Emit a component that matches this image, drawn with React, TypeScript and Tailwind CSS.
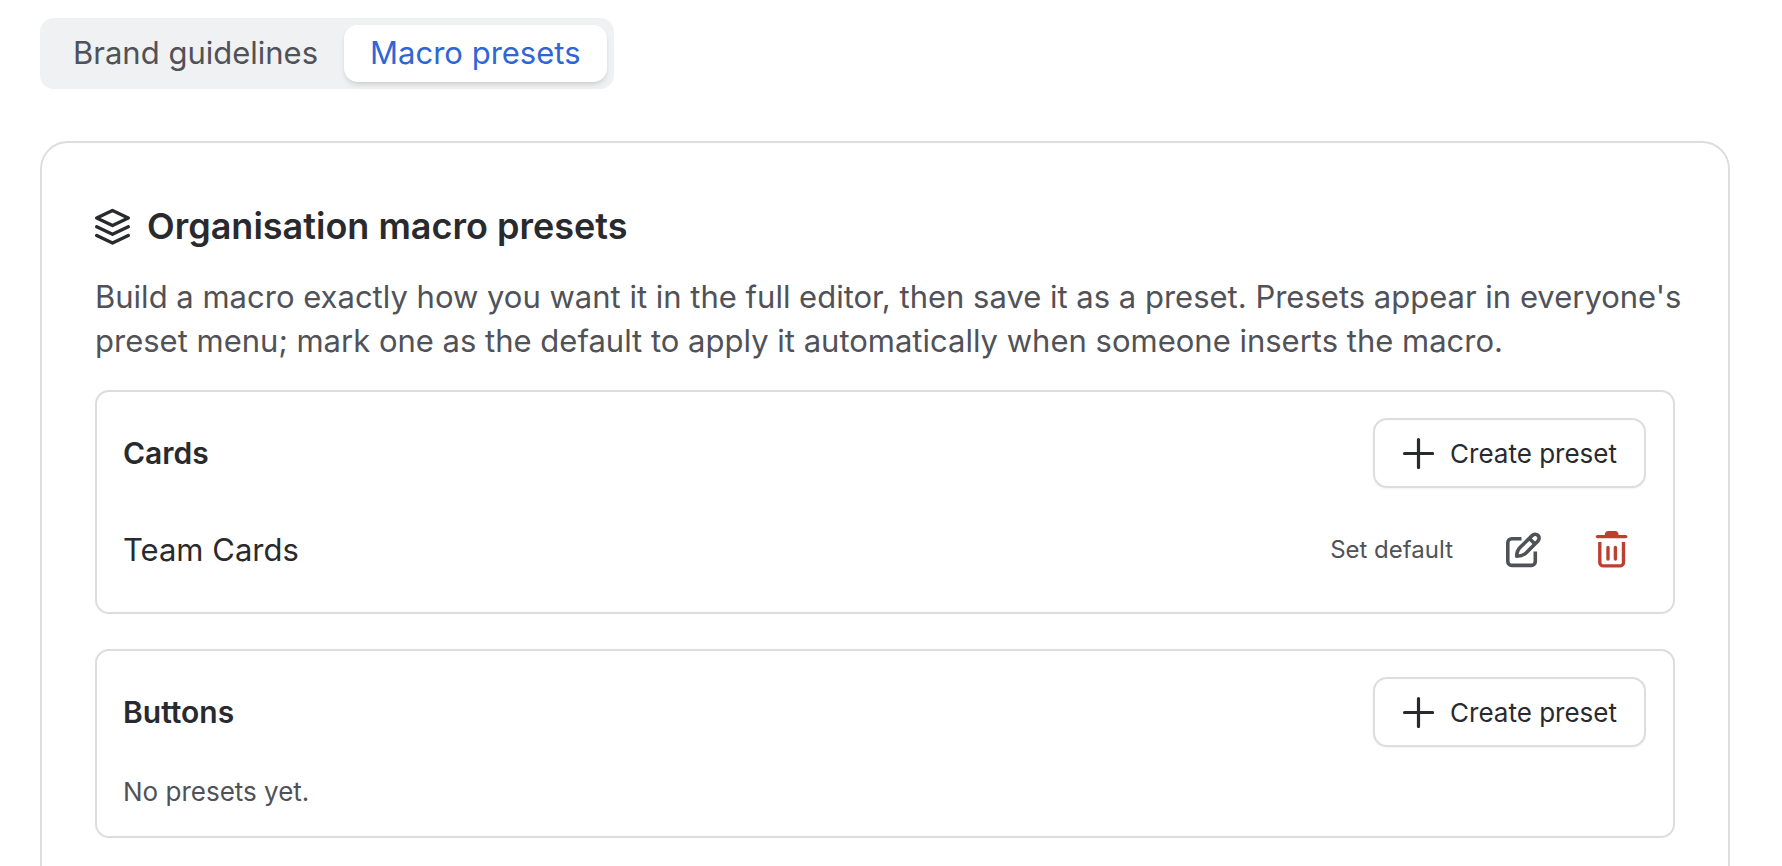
import { useState } from "react";

type Preset = { id: string; name: string };
type MacroGroup = { id: string; title: string; presets: Preset[] };

const tabs = ["Brand guidelines", "Macro presets"];

const groups: MacroGroup[] = [
  { id: "cards", title: "Cards", presets: [{ id: "team-cards", name: "Team Cards" }] },
  { id: "buttons", title: "Buttons", presets: [] },
];

function LayersIcon() {
  return (
    <svg
      className="h-[38px] w-9 shrink-0"
      viewBox="0 0 36 38"
      fill="none"
      stroke="currentColor"
      strokeWidth="3.3"
      strokeLinecap="round"
      strokeLinejoin="round"
      aria-hidden="true"
    >
      <path d="M17.5 3.5 L33.3 11 L17.5 18.6 L1.7 11 Z" />
      <path d="M1.7 19.8 L17.5 27.3 L33.3 19.8" />
      <path d="M1.7 28.5 L17.5 36 L33.3 28.5" />
    </svg>
  );
}

function PlusIcon() {
  return (
    <svg
      className="h-8 w-8"
      viewBox="0 0 32 32"
      fill="none"
      stroke="currentColor"
      strokeWidth="3.2"
      strokeLinecap="round"
      aria-hidden="true"
    >
      <path d="M16.5 2.5 V30.5 M2.5 16.5 H30.5" />
    </svg>
  );
}

function EditIcon() {
  return (
    <svg
      className="h-9 w-9"
      viewBox="0 0 36 36"
      fill="none"
      stroke="currentColor"
      strokeWidth="3.6"
      strokeLinejoin="round"
      aria-hidden="true"
    >
      <path d="M15.5 6.7 H5.8 A4 4 0 0 0 1.8 10.7 V29.4 A4 4 0 0 0 5.8 33.4 H25.3 A4 4 0 0 0 29.3 29.4 V19.5" />
      <path d="M10.7 24.2 C10.7 20.5 12 17.5 14.2 15.3 L26.4 3.4 A3.9 3.9 0 0 1 32 8.9 L20 21 C17.8 23.1 14.5 24.2 10.7 24.2 Z" />
      <path d="M23.4 6.4 L29 12" />
    </svg>
  );
}

function TrashIcon() {
  return (
    <svg
      className="h-[38px] w-9"
      viewBox="0 0 36 38"
      fill="none"
      stroke="currentColor"
      strokeWidth="3.4"
      aria-hidden="true"
    >
      <path d="M10.7 4.5 C10.7 1.6 12 0 14.2 0 H21.2 C23.4 0 24.7 1.6 24.7 4.5 Z" fill="currentColor" stroke="none" />
      <path d="M3.5 5.6 H31.7" strokeLinecap="round" />
      <path d="M5.8 11 V31.4 A3.5 3.5 0 0 0 9.3 34.9 H26 A3.5 3.5 0 0 0 29.5 31.4 V11" />
      <path d="M14 16.5 V28 M21.4 16.5 V28" strokeLinecap="round" />
    </svg>
  );
}

function MacroSection({ group }: { group: MacroGroup }) {
  return (
    <section className="flex flex-col gap-[26px] rounded-[14px] border-2 border-[#dddddf] py-[26px] pr-[27px] pl-[26px]">
      <div className="flex items-center justify-between">
        <h3 className="text-[30px] leading-10 font-semibold">{group.title}</h3>
        <button
          type="button"
          className="flex h-[70px] items-center gap-4 rounded-[14px] border-2 border-[#dddddf] bg-white px-[27px] text-[26px] shadow-xs hover:bg-gray-50"
        >
          <PlusIcon />
          Create preset
        </button>
      </div>

      {group.presets.length === 0 ? (
        <p className="text-[26px] leading-[37px] text-[#505258]">No presets yet.</p>
      ) : (
        group.presets.map((preset) => (
          <div key={preset.id} className="flex h-[72px] items-center justify-between">
            <span className="text-[31px]">{preset.name}</span>
            <div className="flex items-center text-[#505258]">
              <button type="button" className="px-[25px] text-[24px]">
                Set default
              </button>
              <button type="button" className="px-7" aria-label={`Edit ${preset.name}`}>
                <EditIcon />
              </button>
              <button type="button" className="pr-4 pl-6 text-[#bc4030]" aria-label={`Delete ${preset.name}`}>
                <TrashIcon />
              </button>
            </div>
          </div>
        ))
      )}
    </section>
  );
}

export default function App() {
  const [activeTab, setActiveTab] = useState("Macro presets");

  return (
    <div className="h-screen overflow-hidden bg-white pt-[18px] pr-[52px] pl-10 font-['Inter',sans-serif] text-[#292a2e]">
      <div role="tablist" className="inline-flex rounded-[14px] bg-[#f0f1f2] p-[7px]">
        {tabs.map((tab) => (
          <button
            key={tab}
            type="button"
            role="tab"
            aria-selected={activeTab === tab}
            onClick={() => setActiveTab(tab)}
            className={
              activeTab === tab
                ? "h-[57px] rounded-[14px] bg-white px-[26px] text-[31px] text-[#2f66d6] shadow-md"
                : "h-[57px] rounded-[14px] px-[26px] text-[31px] text-[#505258]"
            }
          >
            {tab}
          </button>
        ))}
      </div>

      <main className="mt-[52px] rounded-[28px] border-2 border-[#dddddf] p-[53px]">
        <h2 className="flex items-center gap-4 text-[36px] leading-[60px] font-semibold">
          <LayersIcon />
          Organisation macro presets
        </h2>
        <p className="mt-[19px] -mr-4 text-[31px] leading-[44px] text-[#505258]">
          Build a macro exactly how you want it in the full editor, then save it as a preset. Presets appear in
          everyone's preset menu; mark one as the default to apply it automatically when someone inserts the macro.
        </p>

        <div className="mt-[27px] flex flex-col gap-[35px]">
          {groups.map((group) => (
            <MacroSection key={group.id} group={group} />
          ))}
        </div>
      </main>
    </div>
  );
}
